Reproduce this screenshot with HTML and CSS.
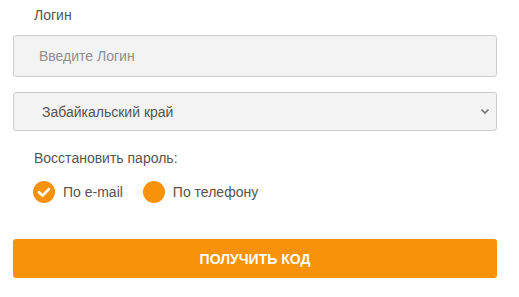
FILE: index.html
```html
<!DOCTYPE html>
<html>
    <head>
        <title>Логин</title>
        <link rel="stylesheet" href="styles.css">
    </head>
    <body>
        <div class="form">
            <div class="label">Логин</div>
            <input type="text" class="input" placeholder="Введите Логин"/>
            <div class="select">
                <span>Забайкальский край</span>
                <svg class="chevron" width="10" height="7" viewBox="0 0 10 7"><path d="M1.5 1.5 L5 5 L8.5 1.5" fill="none" stroke="#777" stroke-width="1.7"/></svg>
            </div>
            <div class="label restore">Восстановить пароль:</div>
            <div class="radios">
                <div class="radio">
                    <span class="dot"><svg width="22" height="22" viewBox="0 0 22 22"><path d="M6 11.2 L9.5 14.6 L16 8" fill="none" stroke="#fff" stroke-width="2.6" stroke-linecap="round" stroke-linejoin="round"/></svg></span>
                    <span>По e-mail</span>
                </div>
                <div class="radio">
                    <span class="dot"></span>
                    <span>По телефону</span>
                </div>
            </div>
            <div class="button">ПОЛУЧИТЬ КОД</div>
        </div>
    </body>
</html>
```

FILE: styles.css
```css
body {
    margin: 0;
    font-family: "Liberation Sans", Arial, sans-serif;
    font-size: 14px;
    color: #555;
    background-color: white;
}
.form {
    padding: 7px 22px 0 13px;
    display: flex;
    flex-direction: column;
}
.label {
    padding-left: 21px;
    line-height: 16px;
    height: 16px;
}
.input {
    margin-top: 12px;
    box-sizing: border-box;
    height: 42px;
    border: 1px solid #ccc;
    border-radius: 3px;
    background-color: #f3f3f3;
    padding: 0 0 0 25px;
    font-family: inherit;
    font-size: 14px;
    color: #555;
    outline: none;
}
.input::placeholder {
    color: #8f8f8f;
}
.select {
    margin-top: 15px;
    box-sizing: border-box;
    height: 39px;
    border: 1px solid #ccc;
    border-radius: 3px;
    background-color: #f3f3f3;
    padding: 0 6px 0 28px;
    display: flex;
    align-items: center;
    justify-content: space-between;
    color: #555;
}
.restore {
    margin-top: 19px;
}
.radios {
    margin-top: 15px;
    display: flex;
    align-items: center;
    padding-left: 20px;
}
.radio {
    display: flex;
    align-items: center;
    margin-right: 20px;
}
.dot {
    width: 22px;
    height: 22px;
    border-radius: 50%;
    background-color: #f7920a;
    margin-right: 8px;
    display: flex;
}
.button {
    margin-top: 36px;
    height: 39px;
    border-radius: 3px;
    background-color: #f7920a;
    color: white;
    font-weight: bold;
    font-size: 14px;
    display: flex;
    align-items: center;
    justify-content: center;
}
```
